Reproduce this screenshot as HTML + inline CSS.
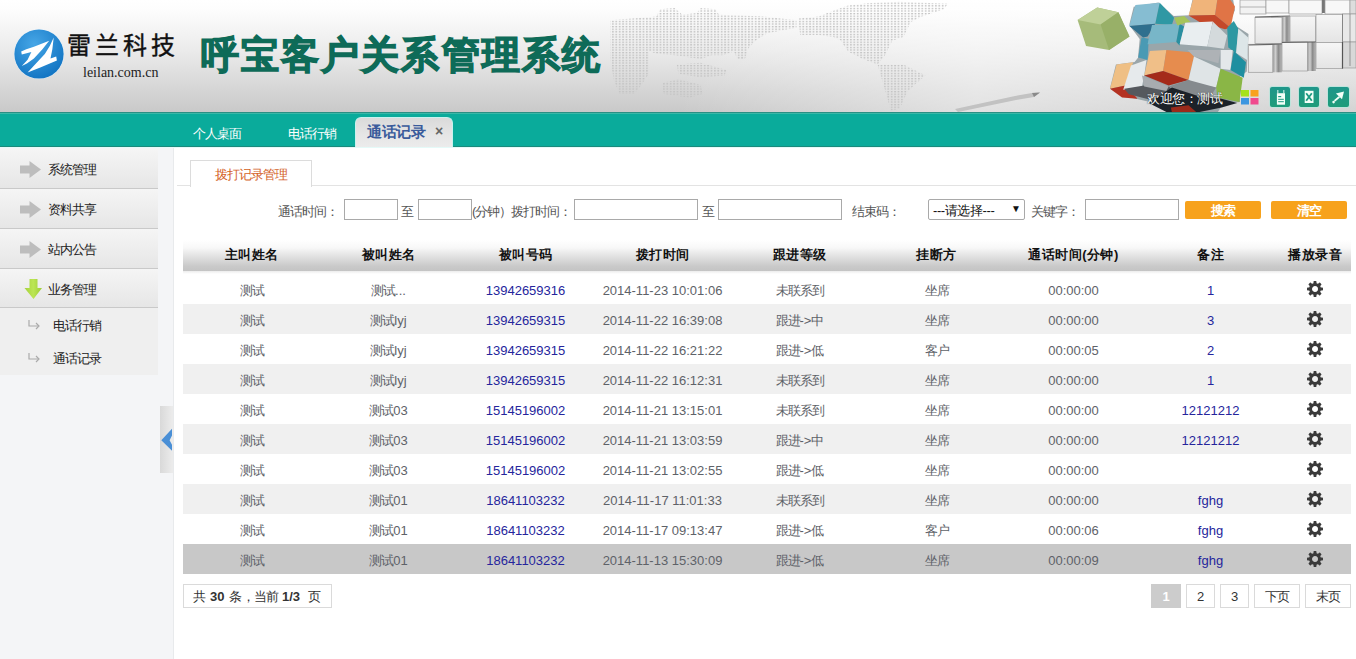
<!DOCTYPE html>
<html><head><meta charset="utf-8">
<style>
*{box-sizing:border-box}
html,body{margin:0;padding:0}
body{width:1356px;height:659px;overflow:hidden;position:relative;background:#fff;font-family:"Liberation Sans",sans-serif;font-size:13px;color:#333}
.abs{position:absolute}
.cn{letter-spacing:-1px}
#hdr{position:absolute;left:0;top:0;width:1356px;height:112px;background:linear-gradient(#ffffff 0%,#fdfdfd 9%,#ebebeb 45%,#c9c9c9 100%);overflow:hidden}
#nav{position:absolute;left:0;top:112px;width:1356px;height:35px;background:#0aab9b;border-top:1px solid #2a8f84;border-bottom:1px solid #1a8a7c;box-shadow:inset 0 1px 0 #3ab8a8, 0 1px 0 #e4faf8}
#nav .t{position:absolute;top:12px;color:#fff;font-size:13px;line-height:18px;letter-spacing:-1px;white-space:nowrap}
#side{position:absolute;left:0;top:148px;width:174px;height:511px;background:#f4f5f7;border-right:1px solid #e8eaec}
.mi{position:absolute;left:0;width:158px;height:40px;background:linear-gradient(#f5f5f5,#e6e6e6);border-bottom:1px solid #c9c9c9}
.mi span{position:absolute;left:48px;top:13px;font-size:13px;line-height:16px;letter-spacing:-1px;color:#222;white-space:nowrap}
.mi svg{position:absolute;left:20px;top:12px}
.sub{position:absolute;left:0;top:160px;width:158px;height:67px;background:#efefef}
.sub span{position:absolute;left:53px;font-size:13px;line-height:16px;letter-spacing:-1px;color:#222;white-space:nowrap}
.lbl{position:absolute;top:204px;font-size:13px;line-height:16px;letter-spacing:-1px;color:#555;white-space:nowrap}
.inp{position:absolute;top:199px;height:21px;border:1px solid #a9a9a9;background:#fff}
.btn{position:absolute;top:201px;height:18px;background:#f7a21c;border-radius:2px;color:#fff;font-weight:bold;font-size:13px;letter-spacing:-0.5px;line-height:20px;text-align:center}
table{position:absolute;left:183px;top:240px;width:1168px;border-collapse:collapse;table-layout:fixed}
th{height:31px;padding:0 0 1px 0;font-size:13px;font-weight:bold;letter-spacing:0.5px;color:#111;background:linear-gradient(#ffffff 0%,#f8f8f8 25%,#e0e0e0 55%,#c9c9c9 85%,#c4c4c4 100%);text-align:center}
td{height:30px;padding:3px 0 0 0;text-align:center;font-size:13px;color:#5e6268;white-space:nowrap;line-height:27px}
td i{font-style:normal;letter-spacing:-1px}
tr.sp td{height:3px;line-height:3px;padding:0;background:linear-gradient(#ececec,#fff)}
tr.g td{background:#f0f0f0}
tr.s td{background:#c8c8c8}
td.b{color:#25259c}
td svg{vertical-align:middle}
td.gr{padding:0;line-height:30px}
.pg{position:absolute;top:584px;height:24px;border:1px solid #dadada;background:#fff;text-align:center;line-height:23px;font-size:13px;color:#333}
.pt{position:absolute;top:589px;line-height:16px;font-size:13px;color:#333;white-space:nowrap}
</style></head>
<body>
<div id="hdr">
<svg class="abs" style="left:0;top:0" width="1356" height="112" viewBox="0 0 1356 112">
<defs>
<pattern id="dots" width="3.4" height="2.6" patternUnits="userSpaceOnUse"><rect width="1.8" height="1.3" fill="#c4c4c4"/></pattern>
<radialGradient id="lg" cx="0.4" cy="0.3" r="0.7"><stop offset="0" stop-color="#46a6e6"/><stop offset="1" stop-color="#1476c4"/></radialGradient>
</defs>
<defs><linearGradient id="lt" x1="0" x2="1" y1="0" y2="0"><stop offset="0" stop-color="#fff" stop-opacity="0"/><stop offset="0.5" stop-color="#fff" stop-opacity="0"/><stop offset="0.72" stop-color="#fff" stop-opacity="0.45"/><stop offset="0.85" stop-color="#fff" stop-opacity="0.3"/><stop offset="1" stop-color="#fff" stop-opacity="0.2"/></linearGradient></defs>
<rect x="0" y="0" width="1356" height="112" fill="url(#lt)"/>
<g fill="url(#dots)">
<polygon points="610.3,20.3 656.4,16.6 660.1,9.2 674.8,8.1 682.2,14.7 696.9,12.9 700.6,8.1 715.4,9.2 719.1,14.7 741.2,15.5 763.3,16.6 796.5,20.3 796.5,27.7 767.0,33.2 755.9,40.6 748.6,47.9 744.9,59.0 737.5,59.0 733.8,51.6 722.7,55.3 711.7,55.3 700.6,59.0 674.8,55.3 656.4,53.5 649.0,51.6 649.0,73.7 641.6,84.8 634.2,94.0 619.5,94.0 614.0,81.1 610.3,59.0"/><polygon points="676.7,64.5 700.6,62.7 726.4,70.1 724.6,75.6 700.6,77.4 678.5,73.7"/><polygon points="661.9,83.0 678.5,79.3 700.6,84.8 702.5,94.0 689.6,97.7 663.7,94.0"/><polygon points="798.3,18.4 818.6,16.6 837.1,9.2 848.1,5.5 870.2,2.9 899.7,1.8 947.7,3.7 944.0,9.2 921.9,16.6 910.8,22.1 907.1,29.5 903.4,36.9 892.4,40.6 885.0,55.3 877.6,64.5 862.9,59.0 848.1,51.6 840.7,40.6 833.4,36.9 818.6,35.0 800.2,35.0"/><polygon points="877.6,64.5 903.4,64.5 925.5,75.6 914.5,84.8 907.1,92.2 899.7,108.8 890.5,110.6 886.8,95.9 881.3,77.4"/>
</g>
<!-- pencil -->
<polygon points="955,109 1015,96 1032,93 1040,92.5 1034,97 1016,100 958,112" fill="#c2c2c2"/><polygon points="1032,93 1040,92.5 1034,97" fill="#8a8a8a"/>
<!-- sketch cubes -->
<defs>
<linearGradient id="sd" x1="0" x2="1" y1="0" y2="0"><stop offset="0" stop-color="#9a9a9a"/><stop offset="0.3" stop-color="#cfcfcf"/><stop offset="0.6" stop-color="#8a8a8a"/><stop offset="1" stop-color="#bdbdbd"/></linearGradient>
<linearGradient id="fc" x1="0" x2="0" y1="0" y2="1"><stop offset="0" stop-color="#f6f6f6"/><stop offset="1" stop-color="#e4e4e4"/></linearGradient>
</defs>
<g stroke="#9a9a9a" stroke-width="0.7">
<rect x="1240" y="0" width="26" height="14" fill="#f2f2f2"/>
<line x1="1240" y1="7" x2="1266" y2="7"/>
<rect x="1266" y="0" width="23" height="13" fill="#f7f7f7"/>
<rect x="1289" y="0" width="33" height="14" fill="#f8f8f8"/>
<rect x="1322" y="0" width="3" height="13" fill="#777" stroke="none"/>
<rect x="1325" y="0" width="25" height="14" fill="#f8f8f8"/>
<rect x="1350" y="0" width="6" height="14" fill="#ddd"/>
<rect x="1255" y="17.6" width="27" height="26" fill="url(#fc)"/>
<rect x="1282" y="16.5" width="8" height="27" fill="url(#sd)" stroke="none"/>
<line x1="1255" y1="17" x2="1290" y2="16" stroke="#666" stroke-width="1.2"/>
<rect x="1290" y="16" width="25.5" height="26" fill="url(#fc)"/>
<rect x="1316" y="14.5" width="26.5" height="28" fill="url(#fc)"/>
<rect x="1342.5" y="14" width="13.5" height="28" fill="#e8e8e8"/>
<line x1="1342.5" y1="14" x2="1342.5" y2="42" stroke="#777"/>
<rect x="1248.5" y="44.3" width="24.3" height="28" fill="url(#fc)"/>
<rect x="1272.8" y="44.3" width="9.2" height="28" fill="url(#sd)" stroke="none"/>
<line x1="1249" y1="45" x2="1282" y2="44" stroke="#666" stroke-width="1.2"/>
<rect x="1282" y="42" width="25.4" height="29" fill="url(#fc)"/>
<rect x="1307.4" y="42" width="8.6" height="29" fill="url(#sd)" stroke="none"/>
<line x1="1282" y1="42.5" x2="1316" y2="42" stroke="#666" stroke-width="1.2"/>
<rect x="1316" y="42.5" width="26.5" height="26" fill="url(#fc)"/>
<rect x="1342.5" y="42" width="13.5" height="26" fill="#d8d8d8"/>
<line x1="1342.5" y1="42" x2="1342.5" y2="68.6" stroke="#555" stroke-width="1.2"/>
<line x1="1350" y1="14" x2="1350" y2="66" stroke="#777"/>
</g>
<polygon points="1129.5,23.8 1133.7,6.8 1158.4,2.5 1173.7,16.1 1189.0,15.3 1192.4,0.0 1233.2,0.0 1234.9,10.2 1229.8,22.1 1248.5,34.0 1246.8,71.4 1240.0,76.5 1240.0,102.0 1223.0,103.7 1217.9,112.0 1172.0,112.0 1149.9,102.0 1121.0,95.2 1109.9,88.4 1115.9,64.6 1134.6,62.0 1138.0,57.8 1139.7,39.1 1129.5,25.5" fill="#9aa6aa"/>
<polygon points="1129.3,26.0 1135.4,5.0 1159.7,2.8 1155.3,23.8" fill="#86bdd2"/>
<polygon points="1159.7,2.8 1174.1,17.7 1171.9,24.9 1155.3,23.8" fill="#2f98a4"/>
<polygon points="1129.3,26.0 1155.3,23.8 1147.6,36.5 1143.1,37.6" fill="#2f6f8e"/>
<polygon points="1138.2,57.5 1141.5,37.6 1148.7,38.7 1147.6,60.0" fill="#4a9ab4"/>
<polygon points="1147.6,44.2 1152.0,24.9 1179.6,23.8 1176.3,42.0" fill="#78b6c8"/>
<polygon points="1179.6,23.8 1184.1,26.5 1179.6,45.4 1176.3,42.0" fill="#2a8fa0"/>
<polygon points="1174.1,17.7 1184.1,16.0 1190.7,22.1 1184.1,23.2 1177.4,25.4" fill="#a6c45a"/>
<polygon points="1188.5,15.5 1192.9,0.0 1217.3,0.0 1215.0,14.9" fill="#f0b47a"/>
<polygon points="1217.3,0.0 1230.5,0.0 1235.0,6.6 1230.5,27.7 1215.0,14.9" fill="#e07446"/>
<polygon points="1188.5,15.5 1215.0,14.9 1230.5,27.7 1225.0,29.3 1199.6,22.1" fill="#c4482a"/>
<polygon points="1179.6,44.2 1185.2,22.7 1212.8,21.6 1207.3,46.5" fill="#e9eef0"/>
<polygon points="1212.8,21.6 1227.2,35.4 1223.9,48.7 1207.3,46.5" fill="#d4dadc"/>
<polygon points="1227.2,27.7 1233.8,21.0 1238.3,28.8 1236.1,53.1 1228.3,47.6" fill="#2e98a2"/>
<polygon points="1238.3,28.8 1248.2,37.6 1247.1,60.0 1236.1,53.1" fill="#dde6e8"/>
<polygon points="1110.0,88.7 1116.6,64.4 1133.2,62.2 1125.4,85.4" fill="#efbf84"/>
<polygon points="1110.0,88.7 1125.4,85.4 1137.6,98.7 1122.1,97.6" fill="#b43222"/>
<polygon points="1123.2,89.8 1131.0,65.5 1146.5,60.0 1144.2,75.4 1142.0,86.5" fill="#e6eaec"/>
<polygon points="1124.3,88.7 1144.2,85.4 1168.6,86.5 1171.9,88.7 1155.3,100.9 1128.8,94.2" fill="#55595e"/>
<polygon points="1142.0,75.4 1168.6,86.5 1166.4,90.9 1144.2,86.5" fill="#a8acb0"/>
<polygon points="1144.2,75.4 1149.8,51.1 1166.4,50.0 1163.1,71.0" fill="#f0bf88"/>
<polygon points="1163.1,71.0 1166.4,50.0 1190.7,52.2 1194.0,56.6 1188.5,79.9" fill="#e68c4e"/>
<polygon points="1144.2,75.4 1163.1,71.0 1188.5,79.9 1168.6,85.4" fill="#a42a1a"/>
<polygon points="1187.4,50.0 1220.6,50.0 1218.4,63.3 1194.0,56.6" fill="#aeb2b6"/>
<polygon points="1220.6,50.0 1232.7,50.0 1230.5,69.9 1220.6,68.8" fill="#e4e8ea"/>
<polygon points="1230.5,69.9 1233.8,51.1 1246.0,62.2 1243.8,77.7" fill="#1f8fa0"/>
<polygon points="1188.5,79.9 1194.0,56.6 1220.6,68.8 1216.2,87.6 1197.3,84.3" fill="#dfe4e6"/>
<polygon points="1168.6,86.5 1188.5,79.9 1216.2,87.6 1210.6,96.5 1197.3,96.5" fill="#858a8e"/>
<polygon points="1216.2,87.6 1220.6,68.8 1242.7,77.7 1239.4,102.0 1217.3,97.6" fill="#8ab646"/>
<polygon points="1148.7,103.1 1171.9,87.6 1199.6,96.5 1221.7,98.7 1237.2,103.1 1221.7,107.5 1199.6,111.9 1166.4,111.9" fill="#1c2229"/>
<polygon points="1170.8,107.5 1188.5,105.3 1196.2,111.9 1171.9,111.9" fill="#9a2a1a"/>
<polygon points="1077.6,20.1 1097.2,7.6 1118.4,12.2 1129.5,36.5 1109.1,50.1 1086.1,45.9" fill="#a6bb7a"/>
<polygon points="1077.6,20.1 1097.2,7.6 1118.4,12.2 1100.6,24.6" fill="#bfd098"/>
<polygon points="1100.6,24.6 1118.4,12.2 1129.5,36.5 1109.1,50.1" fill="#98b068"/>
<!-- color tiles -->
<rect x="1241" y="90" width="8" height="6.5" fill="#a6e21c"/>
<rect x="1250.5" y="90" width="8" height="6.5" fill="#f8a21e"/>
<rect x="1241" y="98" width="8" height="6.5" fill="#3c96e0"/>
<rect x="1250.5" y="98" width="8" height="6.5" fill="#f04a8e"/>
<!-- logo -->
<circle cx="39" cy="54" r="25" fill="#e8f2fa"/>
<circle cx="39" cy="54" r="24.6" fill="url(#lg)"/>
<g transform="translate(14,29)" fill="#fff">
<polygon points="7.2,22.5 12.3,20.3 19.9,17.7 28.2,14.5 35.2,11.7 28.2,20.6 19.9,29.5 12.9,34.6 7.8,37.1 13.6,30.8 17.4,23.1 7.8,25.4"/>
<polygon points="39.7,8.5 35.9,16.8 30.8,25 23.1,33.3 13.6,43.5 26.3,38.4 42.9,31.4 42.2,27.6 36.5,29.5 38.4,19.9"/>
</g>
</svg>
<div class="abs" lang="zh-CN" style="left:67px;top:32px;font-family:'Liberation Serif',serif;font-size:24px;line-height:28px;font-weight:normal;-webkit-text-stroke:0.4px #111;letter-spacing:4px;color:#111;white-space:nowrap">雷兰科技</div>
<div class="abs" style="left:83px;top:65px;font-family:'Liberation Serif',serif;font-size:14px;line-height:16px;color:#222;white-space:nowrap">leilan.com.cn</div>
<div class="abs" style="left:201px;top:31px;font-size:37.5px;line-height:48px;letter-spacing:2.1px;font-weight:bold;color:#0e6b58;-webkit-text-stroke:1.3px #0e6b58;white-space:nowrap">呼宝客户关系管理系统</div>
<div class="abs" style="left:1147px;top:91px;font-size:13px;line-height:16px;letter-spacing:-0.5px;color:#fff;white-space:nowrap;text-shadow:0 0 1px #000">欢迎您：测试</div>
<div class="abs" style="left:1269px;top:86px;width:22px;height:22px;border-radius:3px;background:linear-gradient(#1f968a,#1f9c7a);border:1px solid #bfe4dc"></div>
<div class="abs" style="left:1298px;top:86px;width:22px;height:22px;border-radius:3px;background:linear-gradient(#1f968a,#1f9c7a);border:1px solid #bfe4dc"></div>
<div class="abs" style="left:1327px;top:86px;width:23px;height:22px;border-radius:3px;background:linear-gradient(#1f968a,#1f9c7a);border:1px solid #bfe4dc"></div>
<svg class="abs" style="left:1269px;top:86px" width="82" height="22" viewBox="0 0 82 22">
<g fill="#f4fff8">
<rect x="7.9" y="7.2" width="8.1" height="11.5"/>
<rect x="8.4" y="4" width="0.9" height="3.2"/><rect x="14.4" y="4" width="0.9" height="3.2"/>
<rect x="35.7" y="4.8" width="8.8" height="12.2"/>
<polygon points="66.9,7.5 75,5.5 73,13.3"/>
<polygon points="69.6,10.2 71,11.6 66.2,15.6 64.9,14.3"/>
<circle cx="64.6" cy="16.1" r="1.3"/>
</g>
<g fill="#1f9a82">
<rect x="9.2" y="10" width="3" height="1.2"/><rect x="9.2" y="12.8" width="5.6" height="1"/><rect x="9.2" y="15.2" width="5.6" height="1"/>
<path d="M37.2 7.2L42.8 14.8M42.8 7.2L37.2 14.8" stroke="#1f9a82" stroke-width="1.8"/>
</g></svg>
</div>
<div id="nav">
  <div class="t" style="left:193px">个人桌面</div>
  <div class="t" style="left:288px">电话行销</div>
  <div class="abs" style="left:355px;top:4px;width:98px;height:30px;background:linear-gradient(#dadada,#e6e6e6 60%,#ececec);border-radius:6px 6px 0 0;border:1px solid #c8f2ee;border-bottom:none"></div>
  <div class="abs" style="left:367px;top:10px;font-size:15px;line-height:18px;letter-spacing:-0.5px;color:#3a5b9b;font-weight:bold;white-space:nowrap">通话记录</div>
  <div class="abs" style="left:435px;top:10px;font-size:14px;line-height:16px;color:#666;font-weight:bold">×</div>
</div>
<div id="side">
  <div class="mi" style="top:1px"><svg width="21" height="17" viewBox="0 0 21 17"><path d="M0 4.5H9.5V0L21 8.5L9.5 17V12.5H0Z" fill="#bdbdbd"/></svg><span>系统管理</span></div>
  <div class="mi" style="top:41px"><svg width="21" height="17" viewBox="0 0 21 17"><path d="M0 4.5H9.5V0L21 8.5L9.5 17V12.5H0Z" fill="#bdbdbd"/></svg><span>资料共享</span></div>
  <div class="mi" style="top:81px"><svg width="21" height="17" viewBox="0 0 21 17"><path d="M0 4.5H9.5V0L21 8.5L9.5 17V12.5H0Z" fill="#bdbdbd"/></svg><span>站内公告</span></div>
  <div class="mi" style="top:121px;height:39px"><svg width="18" height="21" viewBox="0 0 18 21" style="left:24px;top:10px"><defs><linearGradient id="ga" x1="0" x2="1"><stop offset="0" stop-color="#a6d23c"/><stop offset="0.5" stop-color="#bce654"/><stop offset="1" stop-color="#9ccc36"/></linearGradient></defs><path d="M5.5 0H13.5V9H18L9.5 20L0.5 9H5.5Z" fill="url(#ga)"/></svg><span>业务管理</span></div>
  <div class="sub">
    <svg class="abs" style="left:28px;top:12px" width="12" height="10" viewBox="0 0 12 10"><path d="M1 0V6H10" stroke="#aaa" stroke-width="1.2" fill="none"/><path d="M8 3L11 6L8 9" stroke="#aaa" stroke-width="1.2" fill="none"/></svg>
    <span style="top:10px">电话行销</span>
    <svg class="abs" style="left:28px;top:45px" width="12" height="10" viewBox="0 0 12 10"><path d="M1 0V6H10" stroke="#aaa" stroke-width="1.2" fill="none"/><path d="M8 3L11 6L8 9" stroke="#aaa" stroke-width="1.2" fill="none"/></svg>
    <span style="top:43px">通话记录</span>
  </div>
  <div class="abs" style="left:160px;top:258px;width:13px;height:67px;background:linear-gradient(90deg,#d9d9d9,#ececec)"></div>
  <svg class="abs" style="left:161px;top:280px" width="11" height="24" viewBox="0 0 11 24"><path d="M0.3 12.2L11 0.8V7.6L8.6 12.2L11 16.7V22.8Z" fill="#4a8fd6"/></svg>
</div>
<!-- content tab -->
<div class="abs" style="left:177px;top:185px;width:1179px;height:1px;background:#e3e3e3"></div>
<div class="abs" style="left:190px;top:160px;width:122px;height:27px;border:1px solid #dcdcdc;border-bottom:none;background:#fff"></div>
<div class="abs cn" style="left:215px;top:167px;font-size:13px;line-height:16px;color:#d4621f;white-space:nowrap">拨打记录管理</div>
<!-- search -->
<div class="lbl" style="left:278px">通话时间：</div>
<div class="inp" style="left:344px;width:54px"></div>
<div class="lbl" style="left:401px">至</div>
<div class="inp" style="left:418px;width:54px"></div>
<div class="lbl" style="left:472px">(分钟）拨打时间：</div>
<div class="inp" style="left:574px;width:124px"></div>
<div class="lbl" style="left:702px">至</div>
<div class="inp" style="left:718px;width:124px"></div>
<div class="lbl" style="left:852px">结束码：</div>
<div class="inp" style="left:928px;width:97px;border-radius:2px"></div>
<div class="abs" style="left:933px;top:203px;font-size:13px;line-height:16px;letter-spacing:-0.4px;color:#111;white-space:nowrap">---请选择---</div>
<div class="abs" style="left:1011px;top:202px;font-size:10px;line-height:14px;color:#111">▼</div>
<div class="lbl" style="left:1031px">关键字：</div>
<div class="inp" style="left:1085px;width:94px"></div>
<div class="btn" style="left:1185px;width:76px">搜索</div>
<div class="btn" style="left:1271px;width:76px">清空</div>
<table>
<colgroup><col style="width:137px"><col style="width:137px"><col style="width:137px"><col style="width:137px"><col style="width:137px"><col style="width:137px"><col style="width:137px"><col style="width:137px"><col style="width:72px"></colgroup>
<tr><th>主叫姓名</th><th>被叫姓名</th><th>被叫号码</th><th>拨打时间</th><th>跟进等级</th><th>挂断方</th><th>通话时间(分钟)</th><th>备注</th><th>播放录音</th></tr>
<tr class="sp"><td colspan="9"></td></tr>
<tr><td><i>测试</i></td><td><i>测试</i>...</td><td class="b">13942659316</td><td>2014-11-23 10:01:06</td><td><i>未联系到</i></td><td><i>坐席</i></td><td>00:00:00</td><td class="b">1</td><td class="gr"><svg width="16" height="16" viewBox="0 0 16 16" style="position:relative;top:-1px"><g fill="#3a3a3a"><rect x="6.5" y="0" width="3" height="4.6" rx="0.7" transform="rotate(0 8 8)"/><rect x="6.5" y="0" width="3" height="4.6" rx="0.7" transform="rotate(45 8 8)"/><rect x="6.5" y="0" width="3" height="4.6" rx="0.7" transform="rotate(90 8 8)"/><rect x="6.5" y="0" width="3" height="4.6" rx="0.7" transform="rotate(135 8 8)"/><rect x="6.5" y="0" width="3" height="4.6" rx="0.7" transform="rotate(180 8 8)"/><rect x="6.5" y="0" width="3" height="4.6" rx="0.7" transform="rotate(225 8 8)"/><rect x="6.5" y="0" width="3" height="4.6" rx="0.7" transform="rotate(270 8 8)"/><rect x="6.5" y="0" width="3" height="4.6" rx="0.7" transform="rotate(315 8 8)"/></g><circle cx="8" cy="8" r="4.5" fill="none" stroke="#3a3a3a" stroke-width="3"/></svg></td></tr>
<tr class="g"><td><i>测试</i></td><td><i>测试</i>lyj</td><td class="b">13942659315</td><td>2014-11-22 16:39:08</td><td><i>跟进</i>-><i>中</i></td><td><i>坐席</i></td><td>00:00:00</td><td class="b">3</td><td class="gr"><svg width="16" height="16" viewBox="0 0 16 16" style="position:relative;top:-1px"><g fill="#3a3a3a"><rect x="6.5" y="0" width="3" height="4.6" rx="0.7" transform="rotate(0 8 8)"/><rect x="6.5" y="0" width="3" height="4.6" rx="0.7" transform="rotate(45 8 8)"/><rect x="6.5" y="0" width="3" height="4.6" rx="0.7" transform="rotate(90 8 8)"/><rect x="6.5" y="0" width="3" height="4.6" rx="0.7" transform="rotate(135 8 8)"/><rect x="6.5" y="0" width="3" height="4.6" rx="0.7" transform="rotate(180 8 8)"/><rect x="6.5" y="0" width="3" height="4.6" rx="0.7" transform="rotate(225 8 8)"/><rect x="6.5" y="0" width="3" height="4.6" rx="0.7" transform="rotate(270 8 8)"/><rect x="6.5" y="0" width="3" height="4.6" rx="0.7" transform="rotate(315 8 8)"/></g><circle cx="8" cy="8" r="4.5" fill="none" stroke="#3a3a3a" stroke-width="3"/></svg></td></tr>
<tr><td><i>测试</i></td><td><i>测试</i>lyj</td><td class="b">13942659315</td><td>2014-11-22 16:21:22</td><td><i>跟进</i>-><i>低</i></td><td><i>客户</i></td><td>00:00:05</td><td class="b">2</td><td class="gr"><svg width="16" height="16" viewBox="0 0 16 16" style="position:relative;top:-1px"><g fill="#3a3a3a"><rect x="6.5" y="0" width="3" height="4.6" rx="0.7" transform="rotate(0 8 8)"/><rect x="6.5" y="0" width="3" height="4.6" rx="0.7" transform="rotate(45 8 8)"/><rect x="6.5" y="0" width="3" height="4.6" rx="0.7" transform="rotate(90 8 8)"/><rect x="6.5" y="0" width="3" height="4.6" rx="0.7" transform="rotate(135 8 8)"/><rect x="6.5" y="0" width="3" height="4.6" rx="0.7" transform="rotate(180 8 8)"/><rect x="6.5" y="0" width="3" height="4.6" rx="0.7" transform="rotate(225 8 8)"/><rect x="6.5" y="0" width="3" height="4.6" rx="0.7" transform="rotate(270 8 8)"/><rect x="6.5" y="0" width="3" height="4.6" rx="0.7" transform="rotate(315 8 8)"/></g><circle cx="8" cy="8" r="4.5" fill="none" stroke="#3a3a3a" stroke-width="3"/></svg></td></tr>
<tr class="g"><td><i>测试</i></td><td><i>测试</i>lyj</td><td class="b">13942659315</td><td>2014-11-22 16:12:31</td><td><i>未联系到</i></td><td><i>坐席</i></td><td>00:00:00</td><td class="b">1</td><td class="gr"><svg width="16" height="16" viewBox="0 0 16 16" style="position:relative;top:-1px"><g fill="#3a3a3a"><rect x="6.5" y="0" width="3" height="4.6" rx="0.7" transform="rotate(0 8 8)"/><rect x="6.5" y="0" width="3" height="4.6" rx="0.7" transform="rotate(45 8 8)"/><rect x="6.5" y="0" width="3" height="4.6" rx="0.7" transform="rotate(90 8 8)"/><rect x="6.5" y="0" width="3" height="4.6" rx="0.7" transform="rotate(135 8 8)"/><rect x="6.5" y="0" width="3" height="4.6" rx="0.7" transform="rotate(180 8 8)"/><rect x="6.5" y="0" width="3" height="4.6" rx="0.7" transform="rotate(225 8 8)"/><rect x="6.5" y="0" width="3" height="4.6" rx="0.7" transform="rotate(270 8 8)"/><rect x="6.5" y="0" width="3" height="4.6" rx="0.7" transform="rotate(315 8 8)"/></g><circle cx="8" cy="8" r="4.5" fill="none" stroke="#3a3a3a" stroke-width="3"/></svg></td></tr>
<tr><td><i>测试</i></td><td><i>测试</i>03</td><td class="b">15145196002</td><td>2014-11-21 13:15:01</td><td><i>未联系到</i></td><td><i>坐席</i></td><td>00:00:00</td><td class="b">12121212</td><td class="gr"><svg width="16" height="16" viewBox="0 0 16 16" style="position:relative;top:-1px"><g fill="#3a3a3a"><rect x="6.5" y="0" width="3" height="4.6" rx="0.7" transform="rotate(0 8 8)"/><rect x="6.5" y="0" width="3" height="4.6" rx="0.7" transform="rotate(45 8 8)"/><rect x="6.5" y="0" width="3" height="4.6" rx="0.7" transform="rotate(90 8 8)"/><rect x="6.5" y="0" width="3" height="4.6" rx="0.7" transform="rotate(135 8 8)"/><rect x="6.5" y="0" width="3" height="4.6" rx="0.7" transform="rotate(180 8 8)"/><rect x="6.5" y="0" width="3" height="4.6" rx="0.7" transform="rotate(225 8 8)"/><rect x="6.5" y="0" width="3" height="4.6" rx="0.7" transform="rotate(270 8 8)"/><rect x="6.5" y="0" width="3" height="4.6" rx="0.7" transform="rotate(315 8 8)"/></g><circle cx="8" cy="8" r="4.5" fill="none" stroke="#3a3a3a" stroke-width="3"/></svg></td></tr>
<tr class="g"><td><i>测试</i></td><td><i>测试</i>03</td><td class="b">15145196002</td><td>2014-11-21 13:03:59</td><td><i>跟进</i>-><i>中</i></td><td><i>坐席</i></td><td>00:00:00</td><td class="b">12121212</td><td class="gr"><svg width="16" height="16" viewBox="0 0 16 16" style="position:relative;top:-1px"><g fill="#3a3a3a"><rect x="6.5" y="0" width="3" height="4.6" rx="0.7" transform="rotate(0 8 8)"/><rect x="6.5" y="0" width="3" height="4.6" rx="0.7" transform="rotate(45 8 8)"/><rect x="6.5" y="0" width="3" height="4.6" rx="0.7" transform="rotate(90 8 8)"/><rect x="6.5" y="0" width="3" height="4.6" rx="0.7" transform="rotate(135 8 8)"/><rect x="6.5" y="0" width="3" height="4.6" rx="0.7" transform="rotate(180 8 8)"/><rect x="6.5" y="0" width="3" height="4.6" rx="0.7" transform="rotate(225 8 8)"/><rect x="6.5" y="0" width="3" height="4.6" rx="0.7" transform="rotate(270 8 8)"/><rect x="6.5" y="0" width="3" height="4.6" rx="0.7" transform="rotate(315 8 8)"/></g><circle cx="8" cy="8" r="4.5" fill="none" stroke="#3a3a3a" stroke-width="3"/></svg></td></tr>
<tr><td><i>测试</i></td><td><i>测试</i>03</td><td class="b">15145196002</td><td>2014-11-21 13:02:55</td><td><i>跟进</i>-><i>低</i></td><td><i>坐席</i></td><td>00:00:00</td><td class="b"></td><td class="gr"><svg width="16" height="16" viewBox="0 0 16 16" style="position:relative;top:-1px"><g fill="#3a3a3a"><rect x="6.5" y="0" width="3" height="4.6" rx="0.7" transform="rotate(0 8 8)"/><rect x="6.5" y="0" width="3" height="4.6" rx="0.7" transform="rotate(45 8 8)"/><rect x="6.5" y="0" width="3" height="4.6" rx="0.7" transform="rotate(90 8 8)"/><rect x="6.5" y="0" width="3" height="4.6" rx="0.7" transform="rotate(135 8 8)"/><rect x="6.5" y="0" width="3" height="4.6" rx="0.7" transform="rotate(180 8 8)"/><rect x="6.5" y="0" width="3" height="4.6" rx="0.7" transform="rotate(225 8 8)"/><rect x="6.5" y="0" width="3" height="4.6" rx="0.7" transform="rotate(270 8 8)"/><rect x="6.5" y="0" width="3" height="4.6" rx="0.7" transform="rotate(315 8 8)"/></g><circle cx="8" cy="8" r="4.5" fill="none" stroke="#3a3a3a" stroke-width="3"/></svg></td></tr>
<tr class="g"><td><i>测试</i></td><td><i>测试</i>01</td><td class="b">18641103232</td><td>2014-11-17 11:01:33</td><td><i>未联系到</i></td><td><i>坐席</i></td><td>00:00:00</td><td class="b">fghg</td><td class="gr"><svg width="16" height="16" viewBox="0 0 16 16" style="position:relative;top:-1px"><g fill="#3a3a3a"><rect x="6.5" y="0" width="3" height="4.6" rx="0.7" transform="rotate(0 8 8)"/><rect x="6.5" y="0" width="3" height="4.6" rx="0.7" transform="rotate(45 8 8)"/><rect x="6.5" y="0" width="3" height="4.6" rx="0.7" transform="rotate(90 8 8)"/><rect x="6.5" y="0" width="3" height="4.6" rx="0.7" transform="rotate(135 8 8)"/><rect x="6.5" y="0" width="3" height="4.6" rx="0.7" transform="rotate(180 8 8)"/><rect x="6.5" y="0" width="3" height="4.6" rx="0.7" transform="rotate(225 8 8)"/><rect x="6.5" y="0" width="3" height="4.6" rx="0.7" transform="rotate(270 8 8)"/><rect x="6.5" y="0" width="3" height="4.6" rx="0.7" transform="rotate(315 8 8)"/></g><circle cx="8" cy="8" r="4.5" fill="none" stroke="#3a3a3a" stroke-width="3"/></svg></td></tr>
<tr><td><i>测试</i></td><td><i>测试</i>01</td><td class="b">18641103232</td><td>2014-11-17 09:13:47</td><td><i>跟进</i>-><i>低</i></td><td><i>客户</i></td><td>00:00:06</td><td class="b">fghg</td><td class="gr"><svg width="16" height="16" viewBox="0 0 16 16" style="position:relative;top:-1px"><g fill="#3a3a3a"><rect x="6.5" y="0" width="3" height="4.6" rx="0.7" transform="rotate(0 8 8)"/><rect x="6.5" y="0" width="3" height="4.6" rx="0.7" transform="rotate(45 8 8)"/><rect x="6.5" y="0" width="3" height="4.6" rx="0.7" transform="rotate(90 8 8)"/><rect x="6.5" y="0" width="3" height="4.6" rx="0.7" transform="rotate(135 8 8)"/><rect x="6.5" y="0" width="3" height="4.6" rx="0.7" transform="rotate(180 8 8)"/><rect x="6.5" y="0" width="3" height="4.6" rx="0.7" transform="rotate(225 8 8)"/><rect x="6.5" y="0" width="3" height="4.6" rx="0.7" transform="rotate(270 8 8)"/><rect x="6.5" y="0" width="3" height="4.6" rx="0.7" transform="rotate(315 8 8)"/></g><circle cx="8" cy="8" r="4.5" fill="none" stroke="#3a3a3a" stroke-width="3"/></svg></td></tr>
<tr class="s"><td><i>测试</i></td><td><i>测试</i>01</td><td class="b">18641103232</td><td>2014-11-13 15:30:09</td><td><i>跟进</i>-><i>低</i></td><td><i>坐席</i></td><td>00:00:09</td><td class="b">fghg</td><td class="gr"><svg width="16" height="16" viewBox="0 0 16 16" style="position:relative;top:-1px"><g fill="#3a3a3a"><rect x="6.5" y="0" width="3" height="4.6" rx="0.7" transform="rotate(0 8 8)"/><rect x="6.5" y="0" width="3" height="4.6" rx="0.7" transform="rotate(45 8 8)"/><rect x="6.5" y="0" width="3" height="4.6" rx="0.7" transform="rotate(90 8 8)"/><rect x="6.5" y="0" width="3" height="4.6" rx="0.7" transform="rotate(135 8 8)"/><rect x="6.5" y="0" width="3" height="4.6" rx="0.7" transform="rotate(180 8 8)"/><rect x="6.5" y="0" width="3" height="4.6" rx="0.7" transform="rotate(225 8 8)"/><rect x="6.5" y="0" width="3" height="4.6" rx="0.7" transform="rotate(270 8 8)"/><rect x="6.5" y="0" width="3" height="4.6" rx="0.7" transform="rotate(315 8 8)"/></g><circle cx="8" cy="8" r="4.5" fill="none" stroke="#3a3a3a" stroke-width="3"/></svg></td></tr>
</table>
<div class="pg" style="left:183px;width:149px"></div>
<span class="pt" style="left:193px">共</span><b class="pt" style="left:210px">30</b><span class="pt" style="left:229px">条</span><span class="pt" style="left:242px">，</span><span class="pt cn" style="left:254px">当前</span><b class="pt" style="left:282px">1/3</b><span class="pt" style="left:308px">页</span>
<div class="pg" style="left:1151px;width:30px;background:#cccccc;border-color:#cccccc;color:#fff;font-weight:bold">1</div>
<div class="pg" style="left:1186px;width:29px">2</div>
<div class="pg" style="left:1220px;width:29px">3</div>
<div class="pg cn" style="left:1254px;width:46px">下页</div>
<div class="pg cn" style="left:1305px;width:46px">末页</div>
</body></html>
